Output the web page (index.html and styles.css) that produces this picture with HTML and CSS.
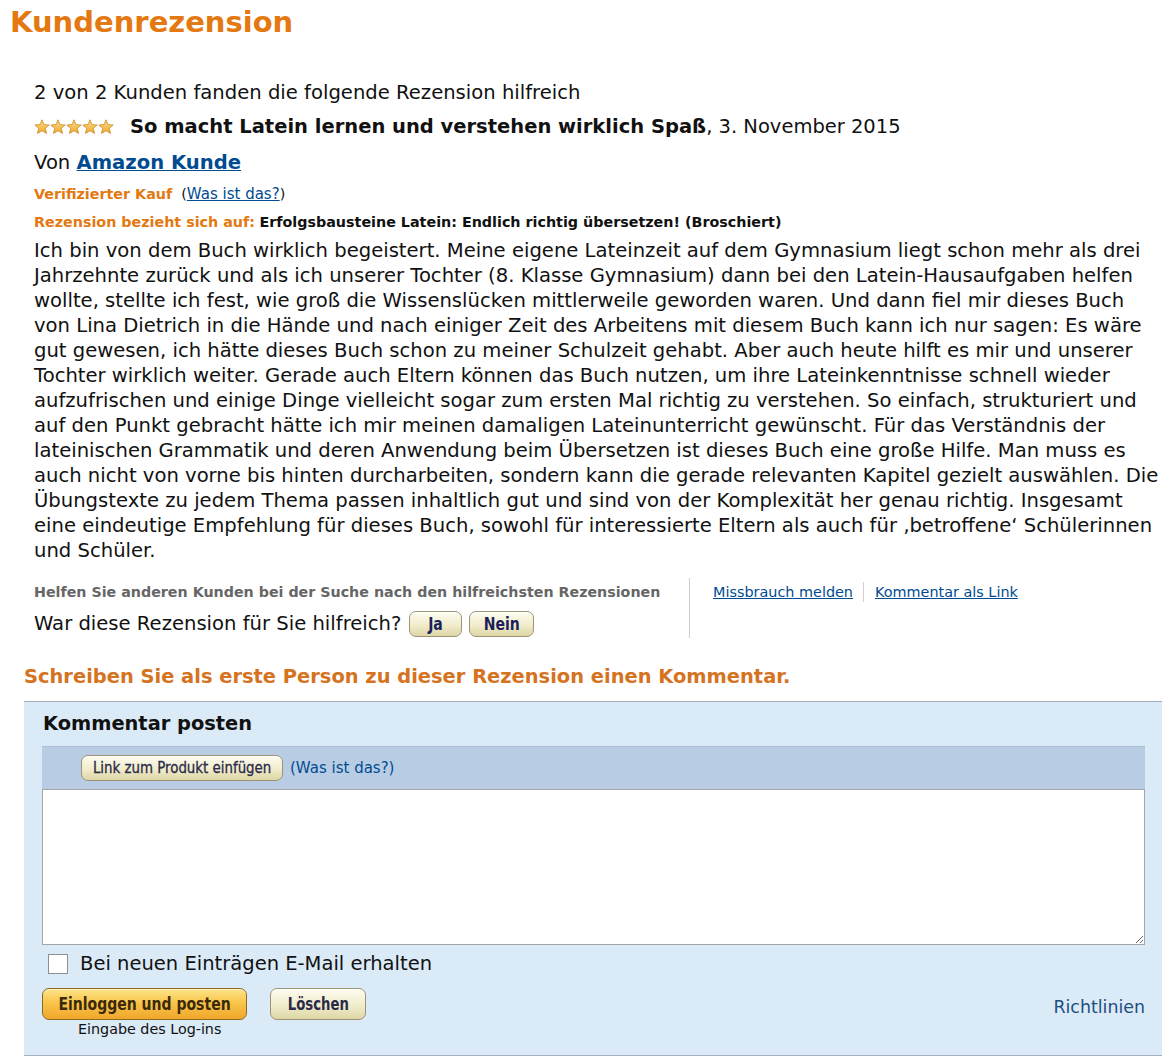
FILE: index.html
```html
<!DOCTYPE html>
<html lang="de">
<head>
<meta charset="utf-8">
<title>Kundenrezension</title>
<link rel="stylesheet" href="styles.css">
</head>
<body>
<h1 class="page-title">Kundenrezension</h1>

<div class="review">
  <div class="helpful-count">2 von 2 Kunden fanden die folgende Rezension hilfreich</div>
  <div class="headline">
    <span class="stars" aria-label="5 von 5 Sternen">
      <svg width="80" height="16" viewBox="0 0 80 16">
        <defs>
          <linearGradient id="sg" x1="0" y1="0" x2="0" y2="1">
            <stop offset="0" stop-color="#fde08a"/>
            <stop offset="1" stop-color="#f0a62a"/>
          </linearGradient>
          <path id="star" d="M8 0.8 L10.1 5.6 L15.2 6 L11.3 9.3 L12.5 14.4 L8 11.7 L3.5 14.4 L4.7 9.3 L0.8 6 L5.9 5.6 Z"/>
        </defs>
        <use href="#star" x="0" fill="url(#sg)" stroke="#c98a2a" stroke-width="0.8"/>
        <use href="#star" x="16" fill="url(#sg)" stroke="#c98a2a" stroke-width="0.8"/>
        <use href="#star" x="32" fill="url(#sg)" stroke="#c98a2a" stroke-width="0.8"/>
        <use href="#star" x="48" fill="url(#sg)" stroke="#c98a2a" stroke-width="0.8"/>
        <use href="#star" x="64" fill="url(#sg)" stroke="#c98a2a" stroke-width="0.8"/>
      </svg>
    </span>
    <span><b class="review-title">So macht Latein lernen und verstehen wirklich Spaß</b>, 3. November 2015</span>
  </div>
  <div class="author">Von <a class="author-link" href="#">Amazon Kunde</a></div>
  <div class="meta"><span class="orange-label">Verifizierter Kauf</span>&nbsp; (<a href="#" class="plain-link">Was ist das?</a>)</div>
  <div class="meta"><span class="orange-label">Rezension bezieht sich auf:</span> <b class="product">Erfolgsbausteine Latein: Endlich richtig übersetzen! (Broschiert)</b></div>
  <p class="review-text">Ich bin von dem Buch wirklich begeistert. Meine eigene Lateinzeit auf dem Gymnasium liegt schon mehr als drei Jahrzehnte zurück und als ich unserer Tochter (8. Klasse Gymnasium) dann bei den Latein-Hausaufgaben helfen wollte, stellte ich fest, wie groß die Wissenslücken mittlerweile geworden waren. Und dann fiel mir dieses Buch von Lina Dietrich in die Hände und nach einiger Zeit des Arbeitens mit diesem Buch kann ich nur sagen: Es wäre gut gewesen, ich hätte dieses Buch schon zu meiner Schulzeit gehabt. Aber auch heute hilft es mir und unserer Tochter wirklich weiter. Gerade auch Eltern können das Buch nutzen, um ihre Lateinkenntnisse schnell wieder aufzufrischen und einige Dinge vielleicht sogar zum ersten Mal richtig zu verstehen. So einfach, strukturiert und auf den Punkt gebracht hätte ich mir meinen damaligen Lateinunterricht gewünscht. Für das Verständnis der lateinischen Grammatik und deren Anwendung beim Übersetzen ist dieses Buch eine große Hilfe. Man muss es auch nicht von vorne bis hinten durcharbeiten, sondern kann die gerade relevanten Kapitel gezielt auswählen. Die Übungstexte zu jedem Thema passen inhaltlich gut und sind von der Komplexität her genau richtig. Insgesamt eine eindeutige Empfehlung für dieses Buch, sowohl für interessierte Eltern als auch für ‚betroffene‘ Schülerinnen und Schüler.</p>

  <div class="feedback">
    <div class="vote">
      <div class="vote-hint">Helfen Sie anderen Kunden bei der Suche nach den hilfreichsten Rezensionen</div>
      <div class="vote-row">War diese Rezension für Sie hilfreich? <button class="btn btn-beige btn-yes"><span class="btn-label">Ja</span></button><button class="btn btn-beige btn-no"><span class="btn-label">Nein</span></button></div>
    </div>
    <div class="report">
      <a href="#" class="plain-link">Missbrauch melden</a><span class="sep"></span><a href="#" class="plain-link">Kommentar als Link</a>
    </div>
  </div>
</div>

<h2 class="comment-cta">Schreiben Sie als erste Person zu dieser Rezension einen Kommentar.</h2>

<div class="comment-box">
  <h3 class="comment-title">Kommentar posten</h3>
  <div class="toolbar">
    <button class="btn btn-beige btn-link"><span class="btn-label">Link zum Produkt einfügen</span></button>
    <a href="#" class="box-link">(Was ist das?)</a>
  </div>
  <textarea class="comment-input"></textarea>
  <label class="notify"><input type="checkbox" class="check"> Bei neuen Einträgen E-Mail erhalten</label>
  <div class="actions">
    <div class="post-col">
      <button class="btn btn-orange"><span class="btn-label">Einloggen und posten</span></button>
      <div class="login-note">Eingabe des Log-ins</div>
    </div>
    <button class="btn btn-beige btn-clear"><span class="btn-label">Löschen</span></button>
    <a href="#" class="box-link guidelines">Richtlinien</a>
  </div>
</div>
</body>
</html>
```

FILE: styles.css
```css
* { box-sizing: border-box; }

body {
  margin: 0;
  padding: 0 0 6px 0;
  background: #fff;
  color: #111;
  font-family: "DejaVu Sans", Verdana, sans-serif;
  font-size: 19.6px;
}

.page-title {
  margin: 0;
  padding: 5px 0 0 10px;
  font-size: 29px;
  line-height: 34px;
  font-weight: bold;
  color: #e47911;
}

.review {
  padding: 0 13px 0 34px;
}

.helpful-count {
  margin-top: 41px;
  line-height: 26px;
}

.headline {
  margin-top: 8px;
  line-height: 26px;
  display: flex;
  align-items: center;
  font-size: 19.5px;
}

.stars {
  display: inline-flex;
  width: 96px;
  height: 26px;
  align-items: center;
  flex: none;
}

.stars svg { display: block; }

.review-title { font-weight: bold; }

.author {
  margin-top: 10px;
  line-height: 26px;
  font-size: 19.6px;
}

.author-link {
  color: #004b91;
  font-weight: bold;
  text-decoration: underline;
}

.meta {
  margin-top: 8px;
  line-height: 20px;
  font-size: 14.3px;
}

.orange-label {
  color: #e47911;
  font-weight: bold;
}

.product {
  color: #111;
  font-weight: bold;
}

.plain-link {
  color: #004b91;
  text-decoration: underline;
}

.meta .plain-link { font-size: 15px; }

.review-text {
  margin: 6px 0 0 0;
  line-height: 25px;
  font-size: 19.6px;
}

.feedback {
  margin-top: 15px;
  display: flex;
  align-items: stretch;
}

.vote {
  width: 656px;
  border-right: 1px solid #ccc;
  padding-top: 4px;
}

.vote-hint {
  line-height: 20px;
  font-size: 14.25px;
  font-weight: bold;
  color: #666;
}

.vote-row {
  margin-top: 8px;
  line-height: 28px;
  height: 28px;
  font-size: 19.6px;
  display: flex;
  align-items: center;
}

.report {
  padding: 4px 0 0 23px;
  line-height: 20px;
  font-size: 14.4px;
  display: flex;
  align-items: flex-start;
}

.sep {
  display: inline-block;
  width: 1px;
  height: 20px;
  background: #e3c9c9;
  margin: 0 11px 0 10px;
}

.btn {
  font-family: "DejaVu Sans Condensed", "DejaVu Sans", sans-serif;
  font-weight: bold;
  cursor: pointer;
  border-radius: 7px;
  padding: 0;
  line-height: 1;
  white-space: nowrap;
  display: inline-flex;
  align-items: center;
  justify-content: center;
  overflow: hidden;
}

.btn-label {
  display: inline-block;
  transform: scaleX(0.865);
  transform-origin: center;
}

.btn-beige {
  background: linear-gradient(#fdfcf0 0%, #f1eccb 55%, #ddd6a6 100%);
  border: 1px solid #9c9474;
  color: #1c1f5c;
  box-shadow: inset 0 1px 0 #fff;
}

.btn-yes, .btn-no {
  height: 26px;
  font-size: 18px;
}

.btn-yes { width: 53px; margin-left: 8px; }
.btn-no { width: 65px; margin-left: 7px; }

.comment-cta {
  margin: 27px 0 0 24px;
  font-size: 19.45px;
  line-height: 24px;
  font-weight: bold;
  color: #d5731f;
}

.comment-box {
  margin: 12px 13px 0 24px;
  background: #dbeaf7;
  border-top: 1px solid #a3b1bf;
  border-bottom: 1px solid #a3b1bf;
  padding: 9px 17px 18px 18px;
}

.comment-title {
  margin: 0;
  line-height: 26px;
  font-size: 19.4px;
  font-weight: bold;
  color: #111;
  padding-left: 1px;
}

.toolbar {
  margin-top: 9px;
  height: 43px;
  background: #b8cde3;
  display: flex;
  align-items: center;
  padding-left: 39px;
  border-top: 1px solid #a9c0da;
}

.btn-link {
  height: 26px;
  width: 202px;
  font-size: 16.5px;
  color: #2a2a4a;
  font-weight: normal;
  -webkit-text-stroke: 0.3px #2a2a4a;
}

.btn-link .btn-label { transform: scaleX(0.9); }

.box-link {
  color: #004b91;
  text-decoration: none;
  font-size: 15px;
  margin-left: 7px;
}

.comment-input {
  display: block;
  width: 100%;
  height: 156px;
  margin: 0;
  border: 1px solid #a5a5a5;
  background: #fff;
  resize: both;
  font-family: inherit;
}

.notify {
  display: flex;
  align-items: center;
  height: 24px;
  margin-top: 7px;
  font-size: 19.55px;
  line-height: 24px;
  color: #111;
}

.check {
  appearance: none;
  -webkit-appearance: none;
  width: 20px;
  height: 20px;
  margin: 0 12px 0 6px;
  background: #fff;
  border: 1px solid #8e8e8e;
  border-radius: 0;
}

.actions {
  margin-top: 12px;
  display: flex;
  align-items: flex-start;
}

.post-col {
  display: flex;
  flex-direction: column;
  width: 205px;
}

.btn-orange {
  width: 205px;
  height: 32px;
  font-size: 18px;
  background: linear-gradient(#fde48a 0%, #f9c54a 45%, #f0a72b 100%);
  border: 1px solid #8c6a22;
  color: #3a2a0a;
  box-shadow: inset 0 1px 0 #fff3c4;
}

.login-note {
  margin-top: 1px;
  line-height: 16px;
  font-size: 14.3px;
  font-family: "DejaVu Sans", sans-serif;
  color: #111;
  padding-left: 36px;
  white-space: nowrap;
}

.btn-clear {
  margin-left: 23px;
  width: 96px;
  height: 32px;
  font-size: 17px;
  color: #2a2a4a;
}

.guidelines {
  margin-left: auto;
  margin-top: 9px;
  font-size: 17.4px;
  color: #1e4f7f;
}
```
